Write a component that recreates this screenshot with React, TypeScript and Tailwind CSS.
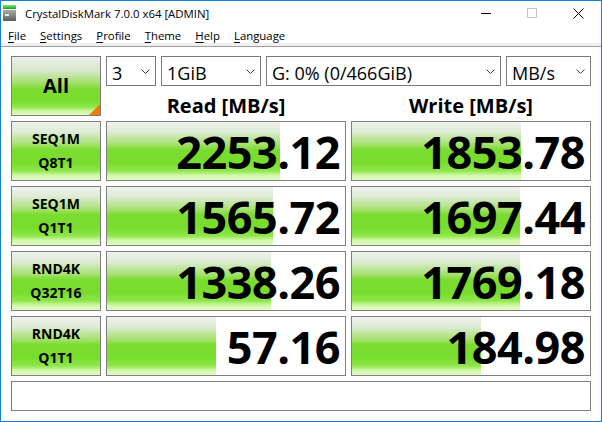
import React from "react";

type Row = {
  name: string;
  param: string;
  read: string;
  write: string;
  readFill: number;
  writeFill: number;
};

const rows: Row[] = [
  { name: "SEQ1M", param: "Q8T1", read: "2253.12", write: "1853.78", readFill: 72.7, writeFill: 71.0 },
  { name: "SEQ1M", param: "Q1T1", read: "1565.72", write: "1697.44", readFill: 69.7, writeFill: 70.6 },
  { name: "RND4K", param: "Q32T16", read: "1338.26", write: "1769.18", readFill: 68.9, writeFill: 70.6 },
  { name: "RND4K", param: "Q1T1", read: "57.16", write: "184.98", readFill: 45.8, writeFill: 54.2 },
];

const Chevron = () => (
  <svg width="9" height="5" viewBox="0 0 9 5" className="shrink-0 self-center">
    <polyline points="0.5,0.5 4.5,4.5 8.5,0.5" fill="none" stroke="#404040" strokeWidth="1" />
  </svg>
);

function Select({ w, value }: { w: string; value: string }) {
  return (
    <div className={`${w} h-[30px] border border-[#7a7a7a] bg-white flex items-start justify-between pl-[5px] pr-[5px]`}>
      <span className="pt-[6px] text-[18px] leading-[20px] whitespace-nowrap">{value}</span>
      <Chevron />
    </div>
  );
}

function Meter({ value, fill }: { value: string; fill: number }) {
  return (
    <div className="relative h-[60px] border border-[#7f7f7f] bg-white flex items-center justify-end pr-[5px] overflow-hidden">
      <div
        className="absolute left-0 top-0 bottom-0 bg-[linear-gradient(to_bottom,#eff1ee_0%,#dfecd7_16%,#a8e172_38%,#7bdc30_48%,#78dd2c_70%,#8fe64a_84%,#d2f8aa_92%,#e2fbc6_100%)]"
        style={{ width: `${fill}%` }}
      />
      <span className="relative text-[45px] leading-[45px] font-bold tracking-[-0.5px]">{value}</span>
    </div>
  );
}

function TestButton({ name, param }: { name: string; param: string }) {
  return (
    <div className="h-[60px] border border-[#7f7f7f] bg-[linear-gradient(to_bottom,#eff1ee_0%,#dfecd7_16%,#a8e172_38%,#7bdc30_48%,#78dd2c_70%,#8fe64a_84%,#d2f8aa_92%,#e2fbc6_100%)] flex flex-col items-center justify-center text-[14px] leading-[24px] font-bold">
      <span>{name}</span>
      <span>{param}</span>
    </div>
  );
}

function DiskIcon() {
  return (
    <svg width="13" height="16" viewBox="0 0 13 16">
      <defs>
        <linearGradient id="barTop" x1="0" y1="0" x2="0" y2="1">
          <stop offset="0" stopColor="#7ae87a" />
          <stop offset="1" stopColor="#16a316" />
        </linearGradient>
        <linearGradient id="body" x1="0" y1="0" x2="0" y2="1">
          <stop offset="0" stopColor="#a9a9a9" />
          <stop offset="0.45" stopColor="#8a8a8a" />
          <stop offset="1" stopColor="#5a5a5a" />
        </linearGradient>
      </defs>
      <rect x="0" y="0" width="13" height="4" fill="url(#barTop)" />
      <rect x="0" y="5" width="13" height="11" fill="url(#body)" />
      <rect x="2" y="9" width="4" height="2" fill="#d8f5cf" />
    </svg>
  );
}

const menus = ["File", "Settings", "Profile", "Theme", "Help", "Language"];

export default function App() {
  return (
    <div className="w-[602px] h-[422px] border border-[#1b7fd6] bg-white flex flex-col overflow-hidden text-black font-['Open_Sans',sans-serif]">
      {/* caption bar */}
      <div className="h-[26px] shrink-0 flex items-start">
        <div className="pl-[2px] pt-[4px]">
          <DiskIcon />
        </div>
        <div className="ml-[9px] pt-[5px] text-[11.4px] leading-[16px] whitespace-nowrap">
          CrystalDiskMark 7.0.0 x64 [ADMIN]
        </div>
        <div className="ml-auto flex h-full">
          <div className="w-[46px] h-full flex items-center justify-center pb-[2px]">
            <div className="w-[10px] h-[1px] bg-black" />
          </div>
          <div className="w-[46px] h-full flex items-center justify-center pb-[2px]">
            <div className="w-[10px] h-[10px] border border-[#c4c4c4]" />
          </div>
          <div className="w-[46px] h-full flex items-center justify-center pb-[2px]">
            <svg width="11" height="11" viewBox="0 0 11 11">
              <path d="M0.5 0.5 L10.5 10.5 M10.5 0.5 L0.5 10.5" stroke="#000" strokeWidth="1" />
            </svg>
          </div>
        </div>
      </div>

      {/* menu bar */}
      <div className="h-[16px] shrink-0 flex pt-[1px] text-[11.4px] leading-[16px]">
        {menus.map((m) => (
          <span key={m} className="px-[7px]">
            <span className="underline underline-offset-[2px]">{m[0]}</span>
            {m.slice(1)}
          </span>
        ))}
      </div>
      <div className="h-[3px] shrink-0 bg-[#f0f0f0]" />
      <div className="h-[1px] shrink-0 bg-[#a0a0a0]" />

      {/* client area */}
      <div className="flex-1 pt-[9px] px-[10px] pb-[10px]">
        <div className="grid grid-cols-[90px_240px_240px] grid-rows-[60px_60px_60px_60px_60px_30px] gap-[5px]">
          <div className="relative border border-[#7f7f7f] bg-[linear-gradient(to_bottom,#eceeeb_0%,#d9e9cf_22%,#a2df68_45%,#7bdc30_56%,#78dd2c_75%,#8fe64a_86%,#d2f8aa_94%,#e2fbc6_100%)] flex items-center justify-center">
            <span className="text-[20px] leading-[24px] font-bold">All</span>
            <div className="absolute right-0 bottom-0 w-[11px] h-[11px] bg-[#f47a00] [clip-path:polygon(100%_0,100%_100%,0_100%)]" />
          </div>

          <div className="col-span-2 flex flex-col">
            <div className="flex gap-[5px]">
              <Select w="w-[50px]" value="3" />
              <Select w="w-[100px]" value="1GiB" />
              <Select w="w-[235px]" value="G: 0% (0/466GiB)" />
              <Select w="w-[85px]" value="MB/s" />
            </div>
            <div className="grid grid-cols-[240px_240px] gap-x-[5px] h-[30px]">
              <div className="text-center pt-[10px] text-[20px] leading-[20px] font-bold">Read [MB/s]</div>
              <div className="text-center pt-[10px] text-[20px] leading-[20px] font-bold">Write [MB/s]</div>
            </div>
          </div>

          {rows.map((r) => (
            <React.Fragment key={r.name + r.param}>
              <TestButton name={r.name} param={r.param} />
              <Meter value={r.read} fill={r.readFill} />
              <Meter value={r.write} fill={r.writeFill} />
            </React.Fragment>
          ))}

          <div className="col-span-3 border border-[#7f7f7f] bg-white" />
        </div>
      </div>
    </div>
  );
}
